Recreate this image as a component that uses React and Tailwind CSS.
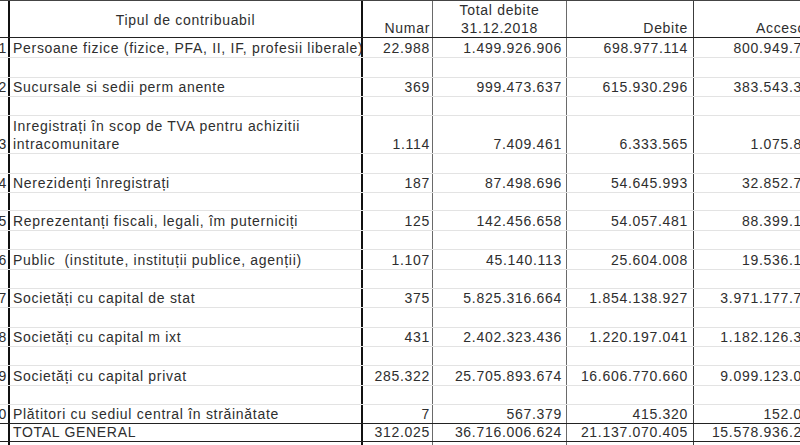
const rows = [
  { n: "1", name: "Persoane fizice (fizice, PFA, II, IF, profesii liberale)", v: ["22.988", "1.499.926.906", "698.977.114", "800.949.792"], h: "h-[20px]", sp: "h-[20px]" },
  { n: "2", name: "Sucursale si sedii perm anente", v: ["369", "999.473.637", "615.930.296", "383.543.341"], h: "h-[19px]", sp: "h-[19px]" },
  { n: "3", name: ["Inregistrați în scop de TVA pentru achizitii", "intracomunitare"], v: ["1.114", "7.409.461", "6.333.565", "1.075.896"], h: "h-[38px]", sp: "h-[20px]" },
  { n: "4", name: "Nerezidenți înregistrați", v: ["187", "87.498.696", "54.645.993", "32.852.703"], h: "h-[19px]", sp: "h-[18px]" },
  { n: "5", name: "Reprezentanți fiscali, legali, îm puterniciți", v: ["125", "142.456.658", "54.057.481", "88.399.177"], h: "h-[20px]", sp: "h-[19px]" },
  { n: "6", name: "Public  (institute, instituții publice, agenții)", v: ["1.107", "45.140.113", "25.604.008", "19.536.105"], h: "h-[20px]", sp: "h-[19px]" },
  { n: "7", name: "Societăți cu capital de stat", v: ["375", "5.825.316.664", "1.854.138.927", "3.971.177.737"], h: "h-[19px]", sp: "h-[20px]" },
  { n: "8", name: "Societăți cu capital m ixt", v: ["431", "2.402.323.436", "1.220.197.041", "1.182.126.395"], h: "h-[19px]", sp: "h-[19px]" },
  { n: "9", name: "Societăți cu capital privat", v: ["285.322", "25.705.893.674", "16.606.770.660", "9.099.123.014"], h: "h-[20px]", sp: "h-[19px]" },
  { n: "10", name: "Plătitori cu sediul central în străinătate", v: ["7", "567.379", "415.320", "152.059"], h: "h-[19px]", sp: null },
];

// column widths include the right-hand rule
const c0 = "w-[10px] shrink-0 border-r-2 border-[#111]";
const c1 = "w-[353px] shrink-0 border-r-2 border-[#111]";
const c2 = "w-[70px] shrink-0 border-r border-[#6a6a6a]";
const c3 = "w-[134px] shrink-0 border-r border-[#6a6a6a]";
const c4 = "w-[127px] shrink-0 border-r border-[#3c3c3c]";
const c5 = "w-[127px] shrink-0";

function Line({ h, border, n, name, v }) {
  return (
    <div className={`flex ${h} ${border}`}>
      <div className={`${c0} flex items-end justify-end overflow-hidden pr-[1px]`}>
        <span className="whitespace-nowrap">{n}</span>
      </div>
      <div className={`${c1} flex flex-col justify-end overflow-hidden pl-[3px]`}>
        {Array.isArray(name)
          ? name.map((t) => <span key={t} className="whitespace-pre">{t}</span>)
          : <span className="whitespace-pre">{name}</span>}
      </div>
      <div className={`${c2} flex items-end justify-end pr-[2px]`}>{v && v[0]}</div>
      <div className={`${c3} flex items-end justify-end pr-[4px]`}>{v && v[1]}</div>
      <div className={`${c4} flex items-end justify-end pr-[5px]`}>{v && v[2]}</div>
      <div className={`${c5} flex items-end justify-end pr-[2px] whitespace-nowrap`}>{v && v[3]}</div>
    </div>
  );
}

export default function App() {
  return (
    <div
      className="w-[800px] h-[445px] overflow-hidden bg-white text-[#2e2e2e] text-[14px] leading-[18px] tracking-[0.7px]"
      style={{ fontFamily: '"Liberation Sans", Arial, sans-serif' }}
    >
      <div className="w-[821px]">
        {/* header */}
        <div className="flex h-[38px] border-t border-b border-t-[#444] border-b-[#222]">
          <div className={c0} />
          <div className={`${c1} flex items-center justify-center pt-[2px]`}>Tipul de contribuabil</div>
          <div className={`${c2} flex items-end justify-end pr-[2px]`}>Numar</div>
          <div className={`${c3} flex flex-col items-center justify-between`}>
            <span>Total debite</span>
            <span>31.12.2018</span>
          </div>
          <div className={`${c4} flex items-end justify-end pr-[5px]`}>Debite</div>
          <div className={`${c5} flex items-end justify-end pr-[2px]`}>Accesorii</div>
        </div>

        {rows.map((r) => (
          <div key={r.n}>
            <Line
              h={r.h}
              border={r.sp ? "border-b border-[#e3e3e3]" : "border-b border-[#222]"}
              n={r.n}
              name={r.name}
              v={r.v}
            />
            {r.sp && <Line h={r.sp} border="border-b border-[#e3e3e3]" />}
          </div>
        ))}

        {/* total */}
        <Line
          h="h-[18px]"
          border="border-b border-[#222]"
          n=""
          name="TOTAL GENERAL"
          v={["312.025", "36.716.006.624", "21.137.070.405", "15.578.936.219"]}
        />
        <div className="flex h-[4px]">
          <div className={c0} />
          <div className={c1} />
          <div className={c2} />
          <div className={c3} />
          <div className={c4} />
          <div className={c5} />
        </div>
      </div>
    </div>
  );
}
